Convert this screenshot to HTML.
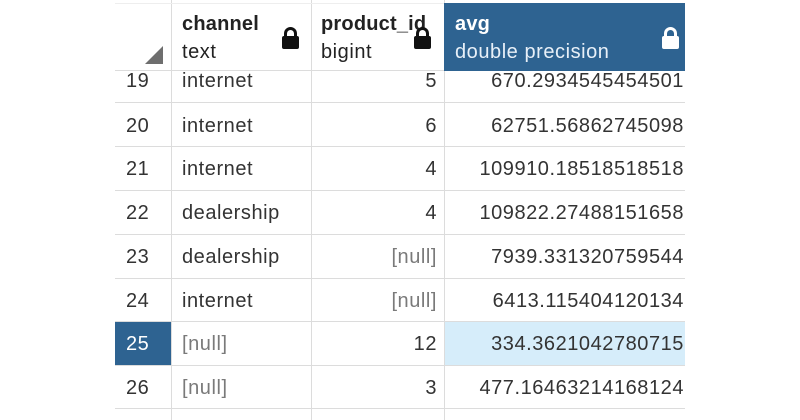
<!DOCTYPE html>
<html><head><style>
body{margin:0;width:800px;height:420px;background:#fff;overflow:hidden;position:relative;font-family:"Liberation Sans",Arial,sans-serif;color:#333}
.a{position:absolute}
.hl{position:absolute;height:1px;background:#dcdcdc;left:115px;width:570px}
.vl{position:absolute;width:1px;background:#dcdcdc;top:0;height:420px}
.t{position:absolute;font-size:20px;line-height:22px;letter-spacing:0.55px;white-space:nowrap}
.r{text-align:right}
.n{color:#7a7a7a}
</style></head><body>
<div class="vl" style="left:171px"></div>
<div class="vl" style="left:311px"></div>
<div class="vl" style="left:444px"></div>
<div class="hl" style="top:3px;background:#eee"></div>

<div class="a" style="left:115px;top:322px;width:56px;height:43px;background:#2e6391"></div>
<div class="a" style="left:445px;top:321px;width:240px;height:43px;background:#d6edfa;border-top:1px solid #2e6391;border-bottom:1px solid #2e6391"></div>

<div class="hl" style="top:102px"></div>
<div class="hl" style="top:146px"></div>
<div class="hl" style="top:190px"></div>
<div class="hl" style="top:234px"></div>
<div class="hl" style="top:278px"></div>
<div class="hl" style="top:321px"></div>
<div class="hl" style="top:365px"></div>
<div class="hl" style="top:408px"></div>

<div class="t" style="left:126px;top:70px">19</div><div class="t" style="left:182px;top:70px">internet</div><div class="t r" style="left:311px;width:126px;top:70px">5</div><div class="t r" style="left:444px;width:240px;top:70px">670.2934545454501</div>
<div class="t" style="left:126px;top:115px">20</div><div class="t" style="left:182px;top:115px">internet</div><div class="t r" style="left:311px;width:126px;top:115px">6</div><div class="t r" style="left:444px;width:240px;top:115px">62751.56862745098</div>
<div class="t" style="left:126px;top:158px">21</div><div class="t" style="left:182px;top:158px">internet</div><div class="t r" style="left:311px;width:126px;top:158px">4</div><div class="t r" style="left:444px;width:240px;top:158px">109910.18518518518</div>
<div class="t" style="left:126px;top:202px">22</div><div class="t" style="left:182px;top:202px">dealership</div><div class="t r" style="left:311px;width:126px;top:202px">4</div><div class="t r" style="left:444px;width:240px;top:202px">109822.27488151658</div>
<div class="t" style="left:126px;top:246px">23</div><div class="t" style="left:182px;top:246px">dealership</div><div class="t r n" style="left:311px;width:126px;top:246px">[null]</div><div class="t r" style="left:444px;width:240px;top:246px">7939.331320759544</div>
<div class="t" style="left:126px;top:290px">24</div><div class="t" style="left:182px;top:290px">internet</div><div class="t r n" style="left:311px;width:126px;top:290px">[null]</div><div class="t r" style="left:444px;width:240px;top:290px">6413.115404120134</div>
<div class="t" style="left:126px;top:333px;color:#fff">25</div><div class="t n" style="left:182px;top:333px">[null]</div><div class="t r" style="left:311px;width:126px;top:333px">12</div><div class="t r" style="left:444px;width:240px;top:333px">334.3621042780715</div>
<div class="t" style="left:126px;top:377px">26</div><div class="t n" style="left:182px;top:377px">[null]</div><div class="t r" style="left:311px;width:126px;top:377px">3</div><div class="t r" style="left:444px;width:240px;top:377px">477.16463214168124</div>

<div class="a" style="left:115px;top:4px;width:329px;height:66px;background:#fff;border-bottom:1px solid #dcdcdc"></div>
<div class="a" style="left:171px;top:4px;width:1px;height:66px;background:#dcdcdc"></div>
<div class="a" style="left:311px;top:4px;width:1px;height:66px;background:#dcdcdc"></div>
<svg class="a" style="left:145px;top:46px" width="19" height="18"><polygon points="0,18 18,18 18,0" fill="#6e6e6e"/></svg>
<div class="t" style="left:182px;top:13px;font-weight:bold;color:#222;letter-spacing:0.2px">channel</div>
<div class="t" style="left:182px;top:41px;color:#222">text</div>
<div class="t" style="left:321px;top:13px;font-weight:bold;color:#222;letter-spacing:0.2px">product_id</div>
<div class="t" style="left:321px;top:41px;color:#222">bigint</div>
<svg class="a" style="left:281px;top:26px" width="19" height="23"><path d="M4.5 11V7.5a5 5 0 0 1 10 0V11" fill="none" stroke="#111" stroke-width="3"/><rect x="1" y="10" width="17" height="13" rx="2" fill="#111"/></svg>
<svg class="a" style="left:413px;top:26px" width="19" height="23"><path d="M4.5 11V7.5a5 5 0 0 1 10 0V11" fill="none" stroke="#111" stroke-width="3"/><rect x="1" y="10" width="17" height="13" rx="2" fill="#111"/></svg>
<div class="a" style="left:444px;top:3px;width:241px;height:68px;background:#2e6391"></div>
<div class="t" style="left:455px;top:13px;font-weight:bold;color:#fff;letter-spacing:0.2px">avg</div>
<div class="t" style="left:455px;top:41px;color:#e8f0f8">double precision</div>
<svg class="a" style="left:661px;top:26px" width="19" height="23"><path d="M4.5 11V7.5a5 5 0 0 1 10 0V11" fill="none" stroke="#fff" stroke-width="3"/><rect x="1" y="10" width="17" height="13" rx="2" fill="#fff"/></svg>
</body></html>
